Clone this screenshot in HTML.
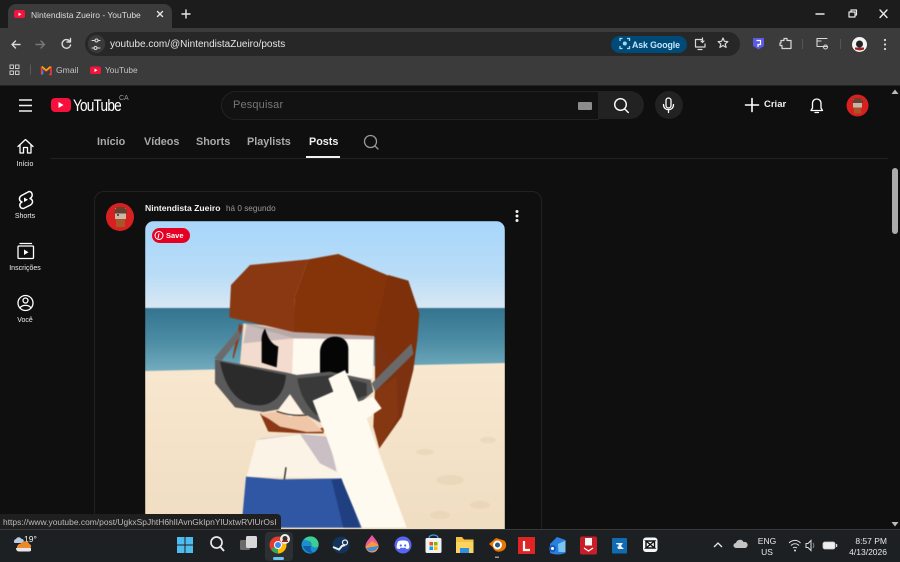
<!DOCTYPE html>
<html><head><meta charset="utf-8"><style>
html,body{margin:0;padding:0;width:900px;height:562px;overflow:hidden;background:#0f0f0f}
body{position:relative;font-family:"Liberation Sans","DejaVu Sans",sans-serif;color:#fff}
.a{position:absolute}
.t{position:absolute;white-space:nowrap;line-height:1}
svg{position:absolute;overflow:visible}
.s{fill:none;stroke:#fff;stroke-width:1.6;stroke-linecap:round;stroke-linejoin:round}
.c{fill:none;stroke:#d8d8d8;stroke-width:1.4;stroke-linecap:round;stroke-linejoin:round}
</style></head><body>
<!-- chrome -->
<div class="a" style="left:0;top:0;width:900px;height:28px;background:#1c1c1c"></div>
<div class="a" style="left:0;top:28px;width:900px;height:57px;background:#3b3b3b"></div>
<div class="a" style="left:8px;top:4px;width:164px;height:26px;background:#3b3b3b;border-radius:8px 8px 0 0"></div>
<div class="a" style="left:14px;top:10px;width:11px;height:8px;background:#f2143c;border-radius:2px"></div>
<svg style="left:0;top:0" width="30" height="30"><path d="M18.500 12.500v3.500l3-1.700z" fill="#fff"/></svg>
<div class="t" style="left:31px;top:10.500px;font-size:8.500px;color:#dcdcdc">Nintendista Zueiro - YouTube</div>
<svg style="left:0;top:0" width="900" height="30"><path class="c" style="stroke:#e6e6e6" d="M157.500 11.500l5 5M162.500 11.500l-5 5M182 14h8M186 10v8"/><path class="c" style="stroke:#e8e8e8" d="M816 14h8"/><path class="c" style="stroke:#e8e8e8;stroke-width:1.200" d="M849 12h6v5h-6zM851 12v-2h5.500v5h-1.500"/><path class="c" style="stroke:#e8e8e8" d="M880 10l7 7.500M887 10l-7 7.500"/></svg>
<!-- omnibox -->
<div class="a" style="left:85px;top:32px;width:655px;height:24px;background:#272727;border-radius:12px"></div>
<div class="a" style="left:88px;top:35px;width:17px;height:18px;background:#3a3a3a;border-radius:9px"></div>
<svg style="left:0;top:28px" width="130" height="28"><path class="c" d="M20 16.500h-8M12 16.500l3.500-3.500M12 16.500l3.500 3.500" style="stroke:#d8d8d8"/><path class="c" style="stroke:#777" d="M36 16.500h8.500M44.500 16.500l-3.500-3.500M44.500 16.500l-3.500 3.500"/><path class="c" d="M70 13.500a4.300 4.300 0 1 0 .6 3.500M70.500 10.500v3.500h-3.500"/><path class="c" style="stroke-width:1" d="M92 12.500h3M98 12.500h2M92 20h2M97 20h3"/><circle class="c" style="stroke-width:1" cx="96.500" cy="12.500" r="1.500"/><circle class="c" style="stroke-width:1" cx="95.500" cy="20" r="1.500"/></svg>
<div class="t" style="left:110px;top:39.500px;font-size:10px;color:#e6e6e6">youtube.com/@NintendistaZueiro/posts</div>
<div class="a" style="left:611px;top:36px;width:76px;height:17px;background:#004a77;border-radius:9px"></div>
<div class="t" style="left:632px;top:40.500px;font-size:8.800px;color:#c2e7ff;font-weight:bold;letter-spacing:-.1px">Ask Google</div>
<svg style="left:450px;top:28px" width="450" height="30"><path d="M170 13v-2.500h2.500M177 10.500h2.500v2.500M170 18v2.500h2.500M177 20.500h2.500V18" fill="none" stroke="#a8d8f4" stroke-width="1.300"/><circle cx="172" cy="16" r="0" fill="#a8d8f4"/><circle cx="174.800" cy="15.500" r="2" fill="#a8d8f4"/>
<path class="c" style="stroke-width:1.200" d="M252 11.500h-6.500v7.500h9.500v-3M248 21.500h4M252.500 10v4.500l-1.500-1.500M252.500 14.500l1.500-1.500"/>
<path class="c" style="stroke-width:1.200" d="M273 10l1.400 3.300 3.500.3-2.700 2.300.9 3.500-3.100-1.900-3.100 1.900.9-3.500-2.700-2.300 3.500-.3z"/>
<path d="M303 10h11v8l-5.500 3.500-5.500-3.500z" fill="#5a5ae6"/><path d="M306.500 12.500h4v4h-2.500v2.500" fill="none" stroke="#fff" stroke-width="1.200"/>
<path class="c" style="stroke-width:1.200" d="M331 12.500h3v-2h3v2h4v8h-9v-3h-2v-2.500h1z"/>
<path d="M352.500 11v10M390.500 11v10" stroke="#555" stroke-width="1"/>
<path class="c" style="stroke-width:1.100" d="M377 18.500h-10v-8h10M367 13h4"/><circle class="c" style="stroke-width:1" cx="375.500" cy="19" r="2"/>
<circle cx="409.500" cy="16.500" r="7.500" fill="#f4f4f4"/><circle cx="409.500" cy="16" r="3.500" fill="#222"/><path d="M405 19.500h9v2l-4 1-5-1z" fill="#922"/>
<circle cx="435" cy="12" r="1.100" fill="#ddd"/><circle cx="435" cy="16.500" r="1.100" fill="#ddd"/><circle cx="435" cy="21" r="1.100" fill="#ddd"/></svg>
<!-- bookmarks -->
<svg style="left:0;top:60px" width="140" height="20"><path class="c" style="stroke-width:1;stroke:#c8c8c8" d="M10 5h3.500v3.500H10zM15.500 5H19v3.500h-3.500zM10 11h3.500v3.500H10zM15.500 11H19v3.500h-3.500z"/><path d="M30.500 4.500v10" stroke="#5a5a5a"/>
<path d="M41.500 14.500V7.500l4.700 3.500 4.800-3.500v7h-1.800" fill="none" stroke="#ea4335" stroke-width="1.500"/><path d="M41.500 14.500h1.800V8" fill="#4285f4"/><path d="M50.500 6.500l-4.300 3.700L42 6.500" fill="none" stroke="#fbbc04" stroke-width="1.200"/>
<rect x="90" y="6.500" width="11" height="7.500" rx="2" fill="#f2143c"/><path d="M94.500 8.500v3.500l3-1.700z" fill="#fff"/></svg>
<div class="t" style="left:56px;top:65.500px;font-size:8.600px;color:#c4c4c4">Gmail</div>
<div class="t" style="left:105px;top:65.500px;font-size:8.300px;color:#c4c4c4">YouTube</div>
<!-- YT masthead -->
<div class="a" style="left:0;top:85px;width:900px;height:1px;background:#222"></div>
<svg style="left:0;top:85px" width="140" height="40"><path d="M19 15h13M19 20.500h13M19 26h13" stroke="#f1f1f1" stroke-width="1.500"/><rect x="51" y="13" width="20" height="14" rx="4" fill="#f5113b"/><path d="M58.500 17v6l5-3z" fill="#fff"/></svg>
<div class="t" style="left:72.500px;top:96.500px;font-size:17px;color:#fff;letter-spacing:-1px;transform:scaleX(.8);transform-origin:left">YouTube</div>
<div class="t" style="left:119px;top:95px;font-size:7px;color:#9a9a9a">CA</div>
<div class="a" style="left:221px;top:91px;width:377px;height:27px;border:1px solid #222;border-right:none;border-radius:15px 0 0 15px;background:#121212"></div>
<div class="a" style="left:598px;top:91px;width:46px;height:28px;background:#222;border-radius:0 15px 15px 0"></div>
<div class="t" style="left:233px;top:100px;font-size:11px;color:#777;letter-spacing:.15px">Pesquisar</div>
<div class="a" style="left:578px;top:102px;width:14px;height:7.500px;background:#8c8c8c;border-radius:1px"></div>
<div class="a" style="left:655px;top:91px;width:28px;height:28px;background:#222;border-radius:50%"></div>
<svg style="left:0;top:85px" width="900" height="40">
<circle class="s" cx="620.500" cy="19.500" r="5.800" style="stroke-width:1.400"/><path class="s" d="M624.800 24l3.500 3.500" style="stroke-width:1.400"/>
<rect class="s" x="666" y="13" width="5" height="10" rx="2.500" style="stroke-width:1.300"/><path class="s" d="M663.500 19.500c0 7 10 7 10 0M668.500 24.500v3" style="stroke-width:1.300"/>
<path class="s" d="M745.500 20h13M752 13.500v13"/>
<path class="s" style="stroke-width:1.300" d="M811 25.500h11.500l-1.500-2.500v-4.500c0-6-8.500-6-8.500 0V23zM815 27.500h3.500"/>
</svg>
<div class="t" style="left:764px;top:100px;font-size:9.500px;color:#f1f1f1;font-weight:bold">Criar</div>
<svg style="left:846px;top:94px" width="23" height="23" viewBox="0 0 23 23"><circle cx="11.500" cy="11.500" r="11" fill="#d82020"/><rect x="7" y="5" width="9" height="8.500" fill="#c7b6a4"/><path d="M6.500 6.500l2-2.500h6l2.500 2.500v2.500H6.500z" fill="#6a4030"/><rect x="8" y="13.500" width="7" height="6" fill="#a8552c"/></svg>
<!-- sidebar -->
<svg style="left:0;top:130px" width="60" height="200">
<path class="s" style="stroke-width:1.300" d="M18 16.500l7.500-7 7.500 7M20 14.500V23h3.500v-5.500h4V23H31v-8.500"/>
<path class="s" style="stroke-width:1.500" d="M29 61.500l-7.500 4c-3 2-2.500 5.500.5 6.500-3.500 2-2.500 6.500 1.500 6.500l7-3.500c3-2 2.500-5.500-.5-6.500 3.500-2 2.500-7-1-7z"/><path d="M24 67.500v4.500l4-2.200z" fill="#fff"/>
<rect class="s" style="stroke-width:1.300" x="18" y="116" width="15.500" height="12.500" rx="1"/><path class="s" style="stroke-width:1.300" d="M20 113.500h11.500"/><path d="M24 119.500v5.500l4.500-2.700z" fill="#fff"/>
<circle class="s" style="stroke-width:1.300" cx="25.500" cy="173" r="7.500"/><circle class="s" style="stroke-width:1.300" cx="25.500" cy="170.500" r="2.500"/><path class="s" style="stroke-width:1.300" d="M20 178c2-3.500 9-3.500 11 0"/>
</svg>
<div class="t" style="left:0;width:50px;text-align:center;top:160.500px;font-size:7px;color:#eee">Início</div>
<div class="t" style="left:0;width:50px;text-align:center;top:212.500px;font-size:7px;color:#eee">Shorts</div>
<div class="t" style="left:0;width:50px;text-align:center;top:264.500px;font-size:7px;color:#eee">Inscrições</div>
<div class="t" style="left:0;width:50px;text-align:center;top:316.500px;font-size:7px;color:#eee">Você</div>
<!-- tabs -->
<div class="t" style="left:97px;top:137px;font-size:10.800px;color:#aaa;font-weight:bold">Início</div>
<div class="t" style="left:144px;top:137px;font-size:10.800px;color:#aaa;font-weight:bold">Vídeos</div>
<div class="t" style="left:196px;top:137px;font-size:10.800px;color:#aaa;font-weight:bold">Shorts</div>
<div class="t" style="left:247px;top:137px;font-size:10.800px;color:#aaa;font-weight:bold">Playlists</div>
<div class="t" style="left:309px;top:137px;font-size:10.800px;color:#f1f1f1;font-weight:bold">Posts</div>
<div class="a" style="left:306px;top:156px;width:34px;height:2px;background:#f1f1f1"></div>
<div class="a" style="left:50px;top:158px;width:838px;height:1px;background:#222"></div>
<svg style="left:0;top:130px" width="400" height="30"><circle cx="370.500" cy="11.500" r="6" fill="none" stroke="#999" stroke-width="1.300"/><path d="M375 16l3 3" stroke="#999" stroke-width="1.300" stroke-linecap="round"/></svg>
<!-- card -->
<div class="a" style="left:94px;top:191px;width:448px;height:360px;border:1px solid #222;border-radius:10px;box-sizing:border-box"></div>
<svg style="left:106px;top:203px" width="28" height="28" viewBox="0 0 28 28"><circle cx="14" cy="14" r="14" fill="#d92020"/><rect x="9" y="5" width="11" height="11" fill="#c9b9a7"/><path d="M8.500 7.500l2-3.500h8l2.500 3.500v3H8.500z" fill="#6a4030"/><circle cx="12" cy="12" r="1" fill="#333"/><rect x="10" y="16" width="9" height="8" fill="#a8552c"/></svg>
<div class="t" style="left:145px;top:204px;font-size:8.600px;color:#f1f1f1;font-weight:bold">Nintendista Zueiro</div>
<div class="t" style="left:226px;top:204.500px;font-size:8.200px;color:#9a9a9a">há 0 segundo</div>
<svg style="left:510px;top:205px" width="14" height="24"><circle cx="7" cy="6.500" r="1.500" fill="#f1f1f1"/><circle cx="7" cy="11" r="1.500" fill="#f1f1f1"/><circle cx="7" cy="15.500" r="1.500" fill="#f1f1f1"/></svg>
<!-- post image -->
<div class="a" style="left:145px;top:221px;width:360px;height:308px;border-radius:9px 9px 0 0;overflow:hidden">
<svg style="left:-145px;top:-221px;filter:blur(.4px)" width="900" height="562">
<defs><linearGradient id="sky" x1="0" y1="221" x2="0" y2="310" gradientUnits="userSpaceOnUse"><stop offset="0" stop-color="#a8d6fb"/><stop offset=".6" stop-color="#b9ddf7"/><stop offset="1" stop-color="#dbe8f3"/></linearGradient>
<linearGradient id="sea" x1="0" y1="308" x2="0" y2="372" gradientUnits="userSpaceOnUse"><stop offset="0" stop-color="#35748f"/><stop offset=".5" stop-color="#4b8ba3"/><stop offset="1" stop-color="#74adbf"/></linearGradient>
<linearGradient id="sand" x1="0" y1="363" x2="0" y2="530" gradientUnits="userSpaceOnUse"><stop offset="0" stop-color="#f8e8cf"/><stop offset="1" stop-color="#f0ddc2"/></linearGradient></defs>
<rect x="145" y="221" width="360" height="88" fill="url(#sky)"/>
<rect x="145" y="308" width="360" height="64" fill="url(#sea)"/>
<path d="M145 371L505 363V530H145z" fill="url(#sand)"/>
<g fill="#e6d0b2" opacity=".55"><ellipse cx="450" cy="480" rx="14" ry="5"/><ellipse cx="480" cy="505" rx="10" ry="4"/><ellipse cx="425" cy="452" rx="9" ry="3"/><ellipse cx="488" cy="440" rx="8" ry="3"/><ellipse cx="440" cy="515" rx="10" ry="4"/></g>
<g transform="translate(180 230) scale(.33333)">
<!-- back hair -->
<path d="M585 320L718 250 712 330 700 420 665 560 598 655 580 590 585 480z" fill="#7c3110"/>
<path d="M590 480L650 440 655 560 598 655 582 590z" fill="#843710"/>
<!-- chin -->
<path d="M240 550L440 570 430 610 375 610 265 605z" fill="#8a3816"/>
<!-- body -->
<path d="M230 630L380 610 450 620 490 745 200 740z" fill="#fbf3e6"/>
<path d="M360 612L445 620 470 725 420 700z" fill="#c9bfc4"/>
<path d="M230 630L380 610 360 612 245 625z" fill="#cfc8d0"/>
<path d="M198 740L300 748 490 745 545 893H184z" fill="#2f57a3"/>
<path d="M455 750L492 745 540 893H490z" fill="#1f3f80"/>
<path d="M318 712l-5 36" stroke="#222" stroke-width="4"/>
<!-- face -->
<path d="M190 280L582 318 580 450 500 560 400 605 300 585 245 555 180 400z" fill="#f6dcc6"/>
<path d="M340 325L580 325 578 445 336 435z" fill="#fefaf0"/>
<path d="M190 340L340 325 336 435 186 395z" fill="#f3dccf"/>
<path d="M195 280L345 305 582 318 580 328 340 325 200 285z" fill="#b8a9a8"/>
<path d="M200 285L340 325 190 340z" fill="#c9babb"/>
<path d="M245 552L290 545 380 556 430 605 380 606 300 590z" fill="#efc6a8"/>
<path d="M325 490L370 550 330 560 295 540z" fill="#fff3e6"/>
<path d="M290 544q45 16 90 11" fill="none" stroke="#111" stroke-width="3"/>
<path d="M160 388L188 290 178 280 158 380z" fill="#8c3a16"/>
<!-- eyes -->
<path d="M255 295C246 310 244 322 245 335L245 398 290 412 295 350C285 345 268 340 255 295z" fill="#050505"/>
<path d="M420 430L420 365C422 335 442 320 465 320C490 320 505 335 505 358L505 430z" fill="#050505"/>
<!-- hair -->
<path d="M148 262L153 165 210 105 385 88 345 198 340 306z" fill="#8a3812"/>
<path d="M345 198L385 88 475 72 632 140 582 318 340 306z" fill="#853308"/>
<path d="M625 135L685 152 718 250 702 350 640 400 582 318z" fill="#7d300a"/>
<!-- strap -->
<path d="M102 385L175 298 182 318 125 392z" fill="#6b6b6b"/>
<path d="M575 460L695 340 700 372 585 485z" fill="#6a6a6a"/>
<!-- glasses -->
<path d="M105 388L320 428 350 435 450 425 572 450 580 485 550 510 420 577 370 550 330 492 295 538 250 546 165 532 105 460z" fill="#5a5a5a"/>
<path d="M120 395L318 435C316 470 300 515 250 525C195 532 140 500 120 395z" fill="#2b2b2b"/>
<path d="M352 445L460 435 560 460 560 495 410 556C390 540 360 500 352 445z" fill="#393939"/>
<!-- hand -->
<path d="M445 445L495 420 525 490 535 515 580 500 605 535 560 565 590 650 680 893H545L490 760 435 610 398 512 460 485z" fill="#fffaf0"/>
</g>
</svg>
</div>
<!-- Save -->
<div class="a" style="left:152px;top:228px;width:38px;height:15px;background:#e60023;border-radius:8px"></div>
<svg style="left:152px;top:228px" width="20" height="15"><circle cx="7" cy="7.500" r="4" fill="none" stroke="#fff" stroke-width="1"/><path d="M7 5.500L6 10.500" stroke="#fff" stroke-width="1"/></svg>
<div class="t" style="left:166px;top:231.500px;font-size:7.500px;color:#fff;font-weight:bold">Save</div>
<!-- scrollbar -->
<svg style="left:890px;top:86px" width="10" height="12"><path d="M5 3.500l3.500 4.500h-7z" fill="#bbb"/></svg>
<div class="a" style="left:892px;top:168px;width:6px;height:66px;background:#ababab;border-radius:3px"></div>
<svg style="left:890px;top:518px" width="10" height="12"><path d="M5 8.500l3.500-4.500h-7z" fill="#bbb"/></svg>
<!-- status url -->
<div class="a" style="left:0;top:514px;width:281px;height:15px;background:#1f1f1f;border-radius:0 4px 0 0"></div>
<div class="t" style="left:3px;top:517.500px;font-size:8.450px;color:#bdbdbd">https://www.youtube.com/post/UgkxSpJhtH6hlIAvnGkIpnYlUxtwRVlUrOsI</div>
<!-- taskbar -->
<div class="a" style="left:0;top:529px;width:900px;height:33px;background:#1c2023;border-top:1px solid #3a3a3a;box-sizing:border-box"></div>
<div class="a" style="left:265px;top:532px;width:28px;height:29px;background:#2c3033;border-radius:4px"></div>
<div class="a" style="left:273px;top:557px;width:11px;height:2.500px;background:#6cc4f0;border-radius:2px"></div>
<div class="t" style="left:24px;top:535px;font-size:8.500px;color:#eee">19°</div>
<svg style="left:0;top:529px" width="900" height="33">
<!-- weather -->
<path d="M14.500 14a2.500 2.500 0 0 1 1.500-4 3 3 0 0 1 5.500 0 2 2 0 0 1 .5 4z" fill="#b8cce0"/><path d="M17 19a4 4 0 0 1 4-4.500 5 5 0 0 1 8.500.5 2.500 2.500 0 0 1 1 4z" fill="#ea8a2a"/><path d="M16 19h15v2.500c0 .5-1 1-2 1H19c-2 0-3-1.500-3-3.500z" fill="#e8e8e8"/>
<!-- win -->
<path d="M177 8h7.500v7.500H177zM185.500 8h7.500v7.500h-7.500zM177 16.500h7.500V24H177zM185.500 16.500h7.500V24h-7.500z" fill="#4fbcf0"/>
<!-- search -->
<circle cx="216.500" cy="13.500" r="5.500" fill="none" stroke="#e8e8e8" stroke-width="1.700"/><path d="M220.500 18l3.500 4" stroke="#e8e8e8" stroke-width="1.900"/>
<!-- task view -->
<rect x="240" y="11" width="10" height="10" rx="1.500" fill="#6a6a6a"/><rect x="246" y="7" width="11" height="12" rx="1.500" fill="#d8d8d8"/>
<!-- chrome -->
<circle cx="278" cy="16" r="8.500" fill="#e33b2e"/><path d="M278 16L271 20a8.500 8.500 0 0 0 7 4.500z" fill="#34a853"/><path d="M278 16v8.500a8.500 8.500 0 0 0 7.500-12.500z" fill="#fbbc04"/><circle cx="278" cy="16" r="4" fill="#fff"/><circle cx="278" cy="16" r="3" fill="#4285f4"/>
<circle cx="285" cy="10" r="5" fill="#eee"/><circle cx="285" cy="9.500" r="2.500" fill="#332"/><path d="M282 11.500h6v1.500h-6z" fill="#922"/>
<!-- edge -->
<circle cx="310" cy="16" r="8.500" fill="#1b8fd0"/><path d="M304 11a8 8 0 0 1 14.500 6c-1 2-6 2-7-1 1-3-3-5-7.500-5z" fill="#3ccf91"/><path d="M303 17c2 6 7 7 11 7-3-1-4-4-3-7z" fill="#0c5fa8"/>
<!-- steam -->
<circle cx="341" cy="16" r="8.500" fill="#12335a"/><path d="M333 18l6 2.500 3-3.500 3-1" stroke="#eee" stroke-width="2" fill="none"/><circle cx="345" cy="13.500" r="2.500" fill="none" stroke="#eee" stroke-width="1.200"/>
<!-- drop -->
<path d="M372 6c2 3 6.500 7 6.500 11a6.500 6.500 0 0 1-13 0c0-4 4.500-8 6.500-11z" fill="#e85a9a"/><path d="M372 12c3 2 6.500 3 6.500 5a6.500 6.500 0 0 1-13 0c2 0 4-3 6.500-5z" fill="#f59a3a"/><path d="M372 18c2 0 4-1 6-1a6.500 6.500 0 0 1-12 2c2 0 4-1 6-1z" fill="#3a8ee6"/>
<!-- discord -->
<circle cx="403" cy="16" r="8.500" fill="#5865f2"/><path d="M398 12.500c3-1.500 7-1.500 10 0 1 2 1.500 4 1.300 6.500-1 .7-2 1-3 1l-.7-1.300h-5.200L399.700 20c-1 0-2-.3-3-1-.2-2.500.3-4.500 1.300-6.500z" fill="#fff"/><circle cx="400.800" cy="16.500" r="1.100" fill="#5865f2"/><circle cx="405.200" cy="16.500" r="1.100" fill="#5865f2"/>
<!-- store -->
<rect x="425.500" y="9" width="16" height="15" rx="1.500" fill="#f1f1f1"/><path d="M429 9c0-4 9-4 9 0" stroke="#3aa0e8" stroke-width="1.300" fill="none"/><path d="M429.500 13h3.500v3.500h-3.500z" fill="#f25022"/><path d="M434 13h3.500v3.500H434z" fill="#7fba00"/><path d="M429.500 17.500h3.500V21h-3.500z" fill="#00a4ef"/><path d="M434 17.500h3.500V21H434z" fill="#ffb900"/>
<!-- folder -->
<path d="M456 8h6l2 2.500h9.500V24H456z" fill="#f5c242"/><path d="M456 13h17.500v11H456z" fill="#fcd462"/><rect x="460" y="19" width="9" height="5" fill="#2f8fe0"/>
<!-- blender -->
<path d="M489 15l7-6 8 2.500c3 2 3 8-1 10-4 2.500-9 1-10-3z" fill="#ea7600"/><circle cx="497.500" cy="16" r="4.500" fill="#fff"/><circle cx="497.500" cy="16" r="2.500" fill="#265787"/>
<rect x="495" y="27.500" width="4" height="1.500" fill="#999"/>
<!-- L -->
<rect x="518" y="8" width="17" height="17" fill="#e02424"/><path d="M524 12v9h6" fill="none" stroke="#fff" stroke-width="2.200"/>
<!-- mail -->
<path d="M550 15l7-7 8.500 3v13c-5 2-11 2-15.500 0z" fill="#2a80e0"/><path d="M558 15l7.500-3.500V23h-7z" fill="#7cc4f0"/><circle cx="552.500" cy="19.500" r="3.500" fill="#1858b8"/><circle cx="552.500" cy="19.500" r="1.500" fill="#fff"/>
<!-- red -->
<rect x="580" y="7.500" width="17" height="18" rx="2" fill="#c81e28"/><path d="M585 9h7v7.500h-7z" fill="#f5f5f5"/><path d="M584 19l4.500 3 4.500-3" stroke="#fff" stroke-width="1.300" fill="none"/>
<!-- blue -->
<rect x="612" y="9" width="15" height="15.500" rx="1" fill="#0f6cb0"/><path d="M616 14h7l-2 3 3 3h-6z" fill="#eef"/><circle cx="617.500" cy="16.500" r="1.200" fill="#0f6cb0"/>
<!-- capcut -->
<rect x="643" y="8.500" width="14.500" height="14.500" rx="3" fill="#f6f6f6"/><path d="M646 12h8.500l-8.500 7h8.500zM646 12v7M654.500 12v7" stroke="#111" stroke-width="1.400" fill="none"/>
<!-- tray -->
<path d="M714 18l4-4 4 4" stroke="#e8e8e8" stroke-width="1.300" fill="none"/>
<path d="M736 19a2.500 2.500 0 0 1 0-5 4 4 0 0 1 7.500-1 3 3 0 0 1 2 6z" fill="#c4c4c4"/>
<path d="M789 14c3.500-3.500 8.500-3.500 11.500 0M791 16.500c2.500-2.300 5.500-2.300 8 0M793 19c1.300-1 2.700-1 4 0" stroke="#e0e0e0" stroke-width="1" fill="none"/><circle cx="795" cy="21.500" r="1" fill="#e0e0e0"/>
<path d="M806 14.500h2l3-3v10l-3-3h-2z" fill="none" stroke="#ddd" stroke-width="1"/><path d="M813 14c1 1.500 1 3.500 0 5" stroke="#888" fill="none"/>
<rect x="823" y="13" width="12" height="7" rx="2" fill="#eee" stroke="#ccc" stroke-width=".8"/><rect x="836" y="15" width="1.200" height="3" fill="#ddd"/>
</svg>
<div class="t" style="left:752px;top:537px;width:30px;text-align:center;font-size:8.500px;color:#e8e8e8">ENG</div>
<div class="t" style="left:752px;top:548px;width:30px;text-align:center;font-size:8.500px;color:#e8e8e8">US</div>
<div class="t" style="left:837px;top:537px;width:50px;text-align:right;font-size:8.500px;color:#e8e8e8">8:57 PM</div>
<div class="t" style="left:837px;top:548px;width:50px;text-align:right;font-size:8.500px;color:#e8e8e8">4/13/2026</div>
</body></html>
